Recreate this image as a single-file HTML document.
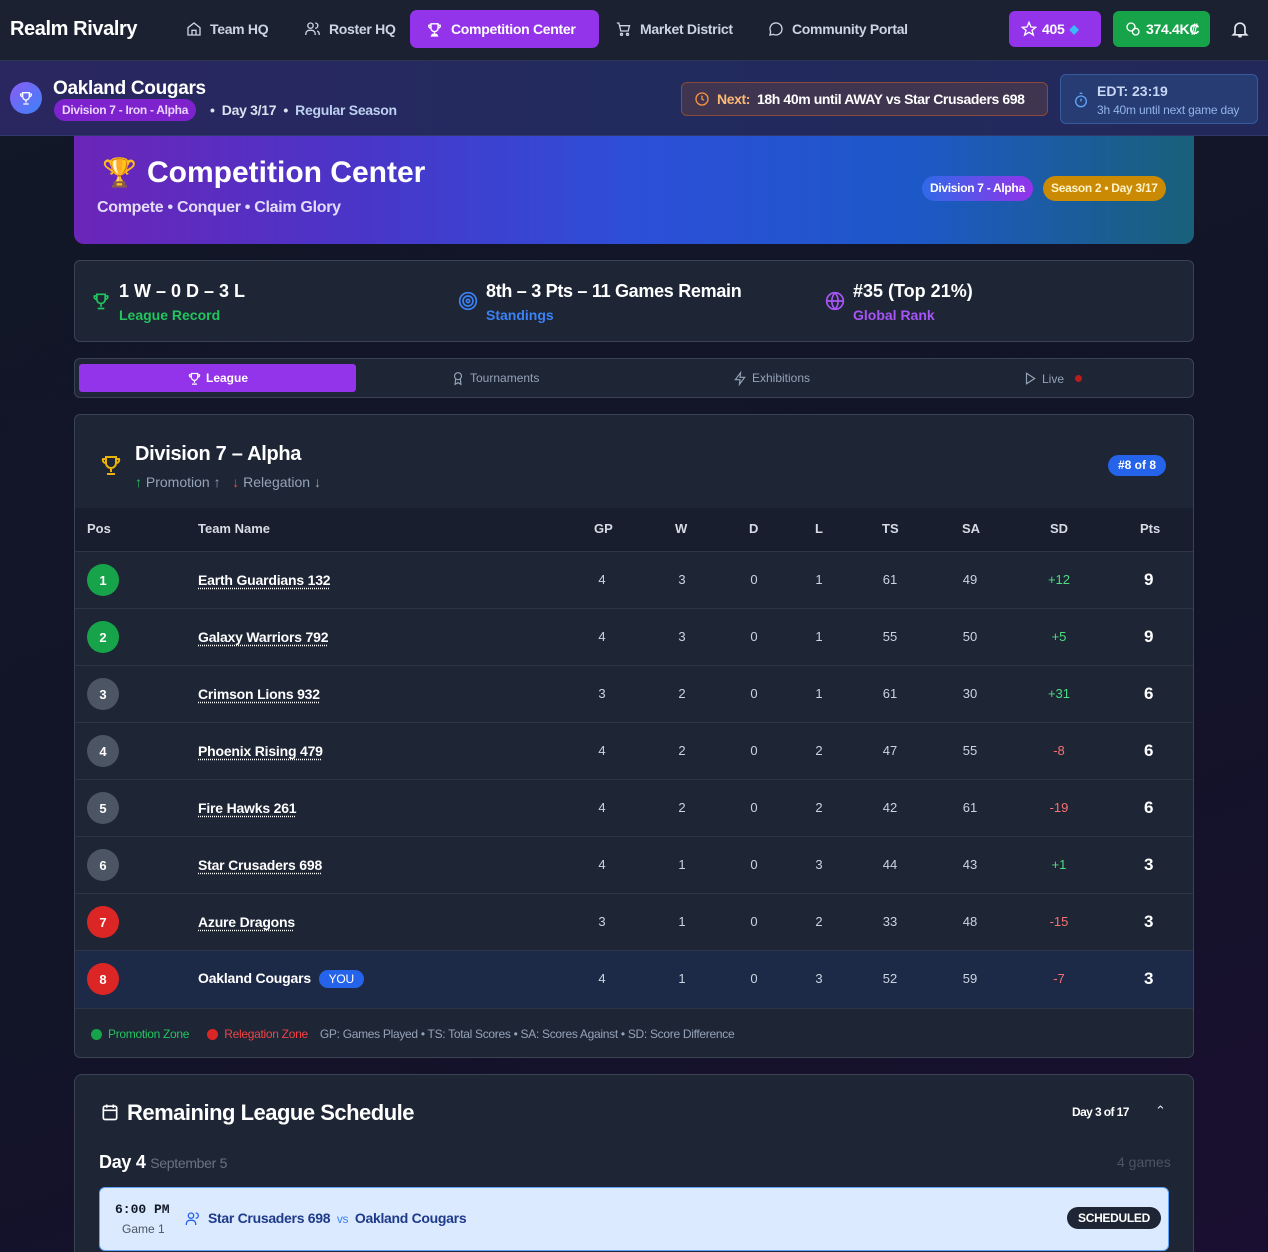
<!DOCTYPE html>
<html><head><meta charset="utf-8"><style>
*{box-sizing:border-box;margin:0;padding:0}
html,body{width:1268px;height:1252px;overflow:hidden}
body{font-family:"Liberation Sans",sans-serif;background:linear-gradient(160deg,#111827 0%,#121428 60%,#1a0f30 100%);color:#fff;position:relative}
.abs{position:absolute}
svg{display:block}
.nav{left:0;top:0;width:1268px;height:61px;background:#1b2130;border-bottom:1px solid #2b3450}
.ni{position:absolute;top:10px;height:38px;display:flex;align-items:center;gap:8px;font-size:14px;font-weight:bold;color:#cbd5e1;letter-spacing:-0.3px}
.sub{left:0;top:61px;width:1268px;height:75px;background:linear-gradient(90deg,#2a2660,#222b5e 50%,#23285a);border-bottom:1px solid #303a6a}
.card{background:#1e2535;border:1px solid #3a4254;border-radius:6px}
.th{position:absolute;top:521px;font-size:13px;color:#d6dbe4;font-weight:bold}
.row{position:absolute;left:75px;width:1118px;height:57px;border-top:1px solid #2d3546}
.c{position:absolute;top:20px;font-size:13px;color:#cbd5e1;transform:translateX(-50%)}
.pos{position:absolute;left:12px;top:12px;width:32px;height:32px;border-radius:50%;font-size:13px;font-weight:bold;display:flex;align-items:center;justify-content:center}
.tn{position:absolute;left:123px;top:20px;font-size:14px;font-weight:bold;color:#fff;text-decoration:underline dotted;text-underline-offset:3px;letter-spacing:-0.2px}
.pts{position:absolute;left:1069px;top:18px;font-size:17px;font-weight:bold}
</style></head><body>
<div class="abs nav">
 <div class="abs" style="left:10px;top:18px;font-size:20px;font-weight:bold;letter-spacing:-0.4px">Realm Rivalry</div>
 <div class="ni" style="left:186px"><svg width="16" height="16" viewBox="0 0 24 24" fill="none" stroke="#cbd5e1" stroke-width="2"><path d="M3 10l9-7 9 7v11H3z"/><path d="M9 21v-7h6v7"/></svg>Team HQ</div>
 <div class="ni" style="left:304px"><svg width="17" height="16" viewBox="0 0 24 24" fill="none" stroke="#cbd5e1" stroke-width="2"><circle cx="9" cy="7" r="4"/><path d="M2 21v-2a5 5 0 015-5h4a5 5 0 015 5v2M16 3a4 4 0 010 8M22 21v-2a5 5 0 00-3-4"/></svg>Roster HQ</div>
 <div class="ni" style="left:410px;width:189px;background:#9333ea;border-radius:7px;padding-left:16px;color:#fff;font-size:14px"><svg width="17" height="17" viewBox="0 0 24 24" fill="none" stroke="#fff" stroke-width="2"><path d="M7 4h10v6a5 5 0 01-10 0zM7 6H4a3 3 0 003 4M17 6h3a3 3 0 01-3 4M12 15v4M8 21h8l-1-2H9z"/></svg>Competition Center</div>
 <div class="ni" style="left:615px"><svg width="17" height="16" viewBox="0 0 24 24" fill="none" stroke="#cbd5e1" stroke-width="2"><path d="M2 3h3l3 12h11l2-8H6"/><circle cx="9" cy="20" r="1.5"/><circle cx="18" cy="20" r="1.5"/></svg>Market District</div>
 <div class="ni" style="left:768px"><svg width="16" height="16" viewBox="0 0 24 24" fill="none" stroke="#cbd5e1" stroke-width="2"><path d="M21 12a9 9 0 01-13 8l-5 1 1-5A9 9 0 1121 12z"/></svg>Community Portal</div>
 <div class="ni" style="left:1009px;width:92px;background:#9333ea;border-radius:6px;padding-left:12px;color:#fff;gap:5px;font-size:14px;height:36px;top:11px"><svg width="16" height="16" viewBox="0 0 24 24" fill="none" stroke="#fff" stroke-width="2"><path d="M12 2l3 7 7 .5-5.5 4.5 2 7-6.5-4-6.5 4 2-7L2 9.5 9 9z"/></svg>405 <span style="color:#38bdf8;font-size:12px">◆</span></div>
 <div class="ni" style="left:1113px;width:97px;background:#16a34a;border-radius:6px;padding-left:12px;color:#fff;gap:5px;font-size:14px;height:36px;top:11px"><svg width="16" height="16" viewBox="0 0 24 24" fill="none" stroke="#fff" stroke-width="2"><circle cx="9" cy="9" r="6"/><circle cx="16" cy="16" r="5"/></svg>374.4K₡</div>
 <svg class="abs" style="left:1230px;top:19px" width="20" height="20" viewBox="0 0 24 24" fill="none" stroke="#e2e8f0" stroke-width="2"><path d="M6 17V11a6 6 0 0112 0v6l2 2H4zM10 21h4"/></svg>
</div>
<div class="abs sub">
 <div class="abs" style="left:10px;top:21px;width:32px;height:32px;border-radius:50%;background:linear-gradient(135deg,#8b5cf6,#3b82f6);display:flex;align-items:center;justify-content:center"><svg width="16" height="16" viewBox="0 0 24 24" fill="none" stroke="#fff" stroke-width="2"><path d="M7 4h10v6a5 5 0 01-10 0zM7 6H4a3 3 0 003 4M17 6h3a3 3 0 01-3 4M12 15v4M8 21h8"/></svg></div>
 <div class="abs" style="left:53px;top:17px;font-size:19px;font-weight:bold;letter-spacing:-0.3px">Oakland Cougars</div>
 <div class="abs" style="left:54px;top:38px;height:22px;padding:0 8px;background:#7e22ce;border-radius:11px;font-size:12px;font-weight:bold;color:#e9d5ff;line-height:22px;letter-spacing:-0.3px">Division 7 - Iron - Alpha</div>
 <div class="abs" style="left:210px;top:41px;font-size:14px;font-weight:bold;color:#dbe2f0;letter-spacing:-0.3px">• &nbsp;Day 3/17 &nbsp;• &nbsp;<span style="color:#bcd0f0">Regular Season</span></div>
 <div class="abs" style="left:681px;top:21px;width:367px;height:34px;border:1px solid #8a4a3a;border-radius:6px;background:#3f3550;display:flex;align-items:center;padding-left:12px;gap:7px;font-size:14px;font-weight:bold;letter-spacing:-0.4px"><svg width="16" height="16" viewBox="0 0 24 24" fill="none" stroke="#fb923c" stroke-width="2"><circle cx="12" cy="12" r="9"/><path d="M12 7v5l3 2"/></svg><span style="color:#fdba74">Next:</span> 18h 40m until AWAY vs Star Crusaders 698</div>
 <div class="abs" style="left:1060px;top:13px;width:198px;height:50px;border:1px solid #345aa0;border-radius:6px;background:#263c72"><svg class="abs" style="left:12px;top:16px" width="16" height="18" viewBox="0 0 24 24" fill="none" stroke="#60a5fa" stroke-width="2"><circle cx="12" cy="14" r="8"/><path d="M10 2h4M12 14V10"/></svg><div class="abs" style="left:36px;top:8px;font-size:14px;font-weight:bold;color:#c7d7f5">EDT: 23:19</div><div class="abs" style="left:36px;top:28px;font-size:12px;color:#93b4e8;letter-spacing:-0.2px">3h 40m until next game day</div></div>
</div>
<div class="abs" style="left:74px;top:136px;width:1120px;height:108px;border-radius:0 0 10px 10px;background:linear-gradient(90deg,#6b25b8 0%,#4a35c8 25%,#2d4fd8 50%,#1d58c8 75%,#19607a 100%)">
 <div class="abs" style="left:28px;top:20px;font-size:28px">🏆</div>
 <div class="abs" style="left:73px;top:20px;font-size:30px;font-weight:bold">Competition Center</div>
 <div class="abs" style="left:23px;top:63px;font-size:16px;font-weight:bold;color:#e3dcf7;letter-spacing:-0.3px">Compete • Conquer • Claim Glory</div>
 <div class="abs" style="left:848px;top:40px;height:25px;padding:0 8px;border-radius:13px;background:linear-gradient(90deg,#2f6ae8,#9333ea);font-size:12px;font-weight:bold;line-height:25px;letter-spacing:-0.3px">Division 7 - Alpha</div>
 <div class="abs" style="left:969px;top:40px;height:25px;padding:0 8px;border-radius:13px;background:#ca8a04;font-size:12px;font-weight:bold;line-height:25px;color:#fef3c7;letter-spacing:-0.3px">Season 2 • Day 3/17</div>
</div>
<div class="abs card" style="left:74px;top:260px;width:1120px;height:82px">
 <svg class="abs" style="left:16px;top:30px" width="20" height="20" viewBox="0 0 24 24" fill="none" stroke="#22c55e" stroke-width="2"><path d="M7 4h10v6a5 5 0 01-10 0zM7 6H4a3 3 0 003 4M17 6h3a3 3 0 01-3 4M12 15v4M8 21h8"/></svg>
 <div class="abs" style="left:44px;top:20px;font-size:18px;font-weight:bold">1 W – 0 D – 3 L</div>
 <div class="abs" style="left:44px;top:46px;font-size:14px;font-weight:bold;color:#22c55e">League Record</div>
 <svg class="abs" style="left:383px;top:30px" width="20" height="20" viewBox="0 0 24 24" fill="none" stroke="#3b82f6" stroke-width="2"><circle cx="12" cy="12" r="10"/><circle cx="12" cy="12" r="6"/><circle cx="12" cy="12" r="2"/></svg>
 <div class="abs" style="left:411px;top:20px;font-size:18px;font-weight:bold;letter-spacing:-0.3px">8th – 3 Pts – 11 Games Remain</div>
 <div class="abs" style="left:411px;top:46px;font-size:14px;font-weight:bold;color:#3b82f6">Standings</div>
 <svg class="abs" style="left:750px;top:30px" width="20" height="20" viewBox="0 0 24 24" fill="none" stroke="#a855f7" stroke-width="2"><circle cx="12" cy="12" r="10"/><path d="M2 12h20M12 2a15 15 0 010 20M12 2a15 15 0 000 20"/></svg>
 <div class="abs" style="left:778px;top:20px;font-size:18px;font-weight:bold">#35 (Top 21%)</div>
 <div class="abs" style="left:778px;top:46px;font-size:14px;font-weight:bold;color:#a855f7">Global Rank</div>
</div>
<div class="abs card" style="left:74px;top:358px;width:1120px;height:40px">
 <div class="abs" style="left:4px;top:5px;width:277px;height:28px;background:#9333ea;border-radius:3px;display:flex;align-items:center;justify-content:center;gap:4px;font-size:12px;font-weight:bold"><svg width="15" height="15" viewBox="0 0 24 24" fill="none" stroke="#fff" stroke-width="2"><path d="M7 4h10v6a5 5 0 01-10 0zM7 6H4a3 3 0 003 4M17 6h3a3 3 0 01-3 4M12 15v4M8 21h8"/></svg>League</div>
 <div class="abs" style="left:376px;top:12px;display:flex;gap:5px;font-size:12px;color:#94a3b8"><svg width="14" height="15" viewBox="0 0 24 24" fill="none" stroke="#94a3b8" stroke-width="2"><circle cx="12" cy="8" r="6"/><path d="M8 13l-1 9 5-3 5 3-1-9"/></svg>Tournaments</div>
 <div class="abs" style="left:658px;top:12px;display:flex;gap:5px;font-size:12px;color:#94a3b8"><svg width="14" height="15" viewBox="0 0 24 24" fill="none" stroke="#94a3b8" stroke-width="2"><path d="M13 2L4 14h8l-1 8 9-12h-8z"/></svg>Exhibitions</div>
 <div class="abs" style="left:948px;top:12px;display:flex;gap:5px;font-size:12px;color:#94a3b8;align-items:center"><svg width="14" height="15" viewBox="0 0 24 24" fill="none" stroke="#94a3b8" stroke-width="2"><path d="M6 3l14 9-14 9z"/></svg>Live <span style="display:inline-block;width:7px;height:7px;border-radius:50%;background:#b91c1c;margin-left:6px"></span></div>
</div>
<div class="abs card" style="left:74px;top:414px;width:1120px;height:644px;overflow:hidden">
 <svg class="abs" style="left:24px;top:38px" width="24" height="24" viewBox="0 0 24 24" fill="none" stroke="#eab308" stroke-width="2"><path d="M7 4h10v6a5 5 0 01-10 0zM7 6H4a3 3 0 003 4M17 6h3a3 3 0 01-3 4M12 15v4M8 21h8"/></svg>
 <div class="abs" style="left:60px;top:28px;font-size:20px;font-weight:bold;letter-spacing:-0.3px">Division 7 – Alpha</div>
 <div class="abs" style="left:60px;top:59px;font-size:14px;color:#94a3b8"><span style="color:#22c55e">↑</span> Promotion ↑ &nbsp; <span style="color:#ef4444">↓</span> Relegation ↓</div>
 <div class="abs" style="left:1033px;top:40px;height:21px;padding:0 10px;border-radius:11px;background:#2563eb;font-size:12px;font-weight:bold;line-height:21px">#8 of 8</div>
 <div class="abs" style="left:0;top:93px;width:1120px;height:44px;background:#181e2d"></div>
</div>
<div class="th" style="left:87px">Pos</div><div class="th" style="left:198px">Team Name</div>
<div class="th" style="left:594px">GP</div><div class="th" style="left:675px">W</div><div class="th" style="left:749px">D</div><div class="th" style="left:815px">L</div><div class="th" style="left:882px">TS</div><div class="th" style="left:962px">SA</div><div class="th" style="left:1050px">SD</div><div class="th" style="left:1140px">Pts</div>

<div class="row" style="top:551px"><div class="pos" style="background:#16a34a">1</div><div class="tn">Earth Guardians 132</div><div class="c" style="left:527px">4</div><div class="c" style="left:607px">3</div><div class="c" style="left:679px">0</div><div class="c" style="left:744px">1</div><div class="c" style="left:815px">61</div><div class="c" style="left:895px">49</div><div class="c" style="left:984px;color:#4ade80">+12</div><div class="pts">9</div></div>
<div class="row" style="top:608px"><div class="pos" style="background:#16a34a">2</div><div class="tn">Galaxy Warriors 792</div><div class="c" style="left:527px">4</div><div class="c" style="left:607px">3</div><div class="c" style="left:679px">0</div><div class="c" style="left:744px">1</div><div class="c" style="left:815px">55</div><div class="c" style="left:895px">50</div><div class="c" style="left:984px;color:#4ade80">+5</div><div class="pts">9</div></div>
<div class="row" style="top:665px"><div class="pos" style="background:#4b5563">3</div><div class="tn">Crimson Lions 932</div><div class="c" style="left:527px">3</div><div class="c" style="left:607px">2</div><div class="c" style="left:679px">0</div><div class="c" style="left:744px">1</div><div class="c" style="left:815px">61</div><div class="c" style="left:895px">30</div><div class="c" style="left:984px;color:#4ade80">+31</div><div class="pts">6</div></div>
<div class="row" style="top:722px"><div class="pos" style="background:#4b5563">4</div><div class="tn">Phoenix Rising 479</div><div class="c" style="left:527px">4</div><div class="c" style="left:607px">2</div><div class="c" style="left:679px">0</div><div class="c" style="left:744px">2</div><div class="c" style="left:815px">47</div><div class="c" style="left:895px">55</div><div class="c" style="left:984px;color:#f87171">-8</div><div class="pts">6</div></div>
<div class="row" style="top:779px"><div class="pos" style="background:#4b5563">5</div><div class="tn">Fire Hawks 261</div><div class="c" style="left:527px">4</div><div class="c" style="left:607px">2</div><div class="c" style="left:679px">0</div><div class="c" style="left:744px">2</div><div class="c" style="left:815px">42</div><div class="c" style="left:895px">61</div><div class="c" style="left:984px;color:#f87171">-19</div><div class="pts">6</div></div>
<div class="row" style="top:836px"><div class="pos" style="background:#4b5563">6</div><div class="tn">Star Crusaders 698</div><div class="c" style="left:527px">4</div><div class="c" style="left:607px">1</div><div class="c" style="left:679px">0</div><div class="c" style="left:744px">3</div><div class="c" style="left:815px">44</div><div class="c" style="left:895px">43</div><div class="c" style="left:984px;color:#4ade80">+1</div><div class="pts">3</div></div>
<div class="row" style="top:893px"><div class="pos" style="background:#dc2626">7</div><div class="tn">Azure Dragons</div><div class="c" style="left:527px">3</div><div class="c" style="left:607px">1</div><div class="c" style="left:679px">0</div><div class="c" style="left:744px">2</div><div class="c" style="left:815px">33</div><div class="c" style="left:895px">48</div><div class="c" style="left:984px;color:#f87171">-15</div><div class="pts">3</div></div>
<div class="row" style="top:950px;background:#1d2a47;height:58px"><div class="pos" style="background:#dc2626">8</div><div class="tn" style="text-decoration:none;top:19px">Oakland Cougars <span style="display:inline-block;margin-left:4px;background:#2563eb;border-radius:10px;padding:2px 10px;font-size:12px;font-weight:normal">YOU</span></div><div class="c" style="left:527px">4</div><div class="c" style="left:607px">1</div><div class="c" style="left:679px">0</div><div class="c" style="left:744px">3</div><div class="c" style="left:815px">52</div><div class="c" style="left:895px">59</div><div class="c" style="left:984px;color:#f87171">-7</div><div class="pts">3</div></div>
<div class="abs" style="left:75px;top:1008px;width:1118px;border-top:1px solid #2d3546"></div>
<div class="abs" style="left:91px;top:1027px;font-size:12px;color:#94a3b8;display:flex;align-items:center;gap:6px;letter-spacing:-0.3px"><span style="width:11px;height:11px;border-radius:50%;background:#16a34a;display:inline-block"></span><span style="color:#22c55e">Promotion Zone</span>&nbsp;&nbsp;<span style="width:11px;height:11px;border-radius:50%;background:#dc2626;display:inline-block"></span><span style="color:#ef4444">Relegation Zone</span>&nbsp;&nbsp;GP: Games Played • TS: Total Scores • SA: Scores Against • SD: Score Difference</div>

<div class="abs card" style="left:74px;top:1074px;width:1120px;height:200px;border-radius:8px">
 <svg class="abs" style="left:25px;top:27px" width="20" height="20" viewBox="0 0 24 24" fill="none" stroke="#fff" stroke-width="2"><rect x="4" y="5" width="16" height="16" rx="2"/><path d="M4 10h16M8 3v4M16 3v4"/></svg>
 <div class="abs" style="left:52px;top:25px;font-size:22px;font-weight:bold;letter-spacing:-0.5px">Remaining League Schedule</div>
 <div class="abs" style="left:997px;top:30px;font-size:12px;font-weight:bold;letter-spacing:-0.6px">Day 3 of 17</div>
 <div class="abs" style="left:1080px;top:28px;font-size:13px;color:#e2e8f0">⌃</div>
 <div class="abs" style="left:24px;top:77px;font-size:18px;font-weight:bold;letter-spacing:-0.3px">Day 4 <span style="font-size:14px;font-weight:normal;color:#6b7280">September 5</span></div>
 <div class="abs" style="left:1042px;top:79px;font-size:14px;color:#4b5563">4 games</div>
 <div class="abs" style="left:24px;top:112px;width:1070px;height:64px;background:#dbeafe;border:1px solid #60a5fa;border-radius:6px">
  <div class="abs" style="left:15px;top:14px;font-family:'Liberation Mono',monospace;font-size:13px;font-weight:bold;color:#111827">6:00 PM</div>
  <div class="abs" style="left:22px;top:34px;font-size:12px;color:#4b5563">Game 1</div>
  <svg class="abs" style="left:85px;top:23px" width="16" height="16" viewBox="0 0 24 24" fill="none" stroke="#2563eb" stroke-width="2"><circle cx="9" cy="7" r="4"/><path d="M2 21v-2a5 5 0 015-5h4a5 5 0 015 5v2M16 3a4 4 0 010 8"/></svg>
  <div class="abs" style="left:108px;top:22px;font-size:14px;font-weight:bold;color:#1e3a8a;letter-spacing:-0.3px">Star Crusaders 698 <span style="color:#3b82f6;font-weight:normal;font-size:12px">&nbsp;vs&nbsp;</span> Oakland Cougars</div>
  <div class="abs" style="left:967px;top:19px;height:22px;padding:0 11px;background:#1e2535;border-radius:11px;font-size:12px;font-weight:bold;line-height:22px;letter-spacing:-0.3px">SCHEDULED</div>
 </div>
</div>
</body></html>
